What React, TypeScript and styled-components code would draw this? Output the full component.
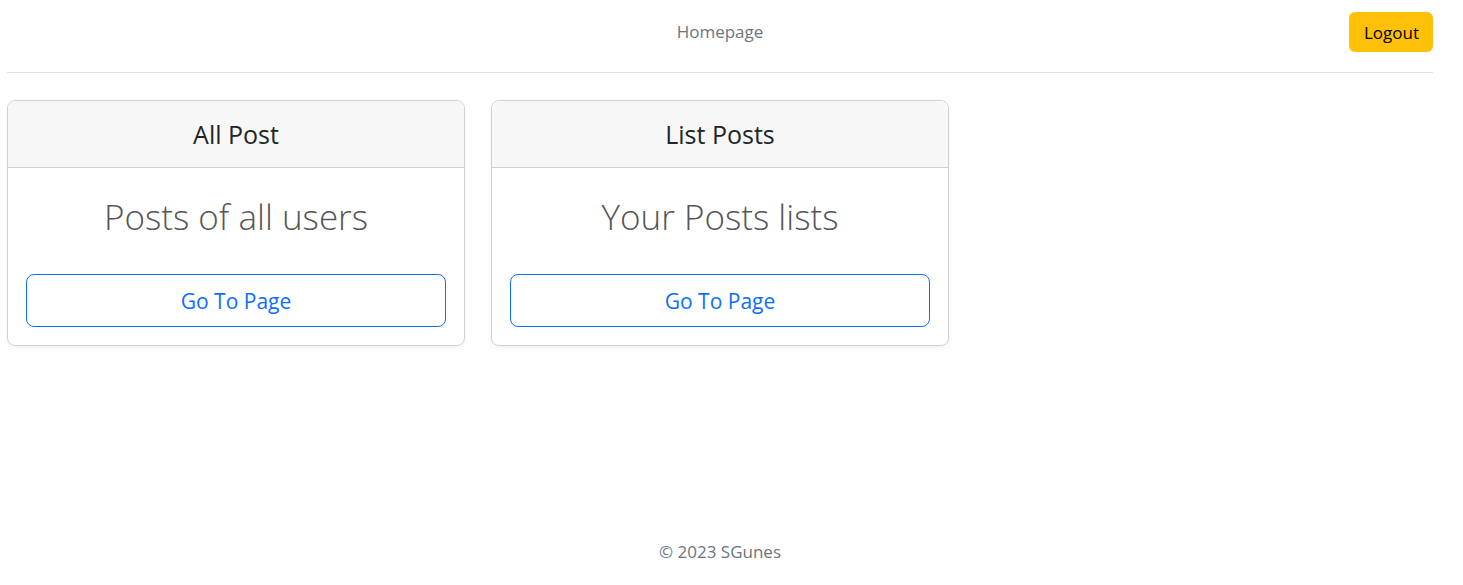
import React from "react";
import styled, { createGlobalStyle } from "styled-components";

const Global = createGlobalStyle`
  html, body { margin: 0; padding: 0; background: #fff; }
  body { font-family: "Segoe UI", "Open Sans", "Noto Sans", sans-serif; color: #212529; }
  * { box-sizing: border-box; }
`;

const Page = styled.div`
  min-height: 100vh;
  display: flex;
  flex-direction: column;
  padding-left: 7px;
  width: 1433px;
`;

const Header = styled.header`
  display: grid;
  grid-template-columns: 1fr auto 1fr;
  align-items: center;
  padding: 12px 0 20px;
  border-bottom: 1px solid #dee2e6;
`;

const NavLink = styled.a`
  grid-column: 2;
  font-size: 17px;
  line-height: 24px;
  color: #6c757d;
  text-decoration: none;
`;

const LogoutButton = styled.button`
  grid-column: 3;
  justify-self: end;
  height: 40px;
  padding: 0 14px 0 15px;
  border: none;
  border-radius: 6px;
  background: #ffc107;
  color: #000;
  font-family: inherit;
  font-size: 17px;
`;

const CardRow = styled.main`
  display: flex;
  gap: 26px;
  margin-top: 27px;
`;

const Card = styled.section`
  width: 458px;
  border: 1px solid #d3d3d3;
  border-radius: 8px;
  box-shadow: 0 2px 4px rgba(0, 0, 0, 0.06);
  overflow: hidden;
`;

const CardHeader = styled.div`
  background: #f7f7f7;
  border-bottom: 1px solid #d0d0d0;
  padding: 19px 0 18px;
  text-align: center;
  font-size: 25px;
  line-height: 29px;
  color: #212529;
`;

const CardBody = styled.div`
  padding: 27px 18px 18px;
  text-align: center;
`;

const Lead = styled.h2`
  margin: 0 0 36px;
  font-size: 35px;
  line-height: 43px;
  font-weight: 300;
  color: #555;
`;

const OutlineButton = styled.button`
  width: 100%;
  height: 53px;
  border: 1px solid #0d6efd;
  border-radius: 8px;
  background: #fff;
  color: #0d6efd;
  font-family: inherit;
  font-size: 21px;
`;

const Footer = styled.footer`
  margin-top: auto;
  padding-bottom: 21px;
  text-align: center;
  font-size: 17px;
  line-height: 24px;
  color: #6c757d;
`;

const cards = [
  { title: "All Post", text: "Posts of all users" },
  { title: "List Posts", text: "Your Posts lists" },
];

export default function App() {
  return (
    <>
      <Global />
      <Page>
        <Header>
          <NavLink href="#">Homepage</NavLink>
          <LogoutButton>Logout</LogoutButton>
        </Header>
        <CardRow>
          {cards.map((c) => (
            <Card key={c.title}>
              <CardHeader>{c.title}</CardHeader>
              <CardBody>
                <Lead>{c.text}</Lead>
                <OutlineButton>Go To Page</OutlineButton>
              </CardBody>
            </Card>
          ))}
        </CardRow>
        <Footer>© 2023 SGunes</Footer>
      </Page>
    </>
  );
}
